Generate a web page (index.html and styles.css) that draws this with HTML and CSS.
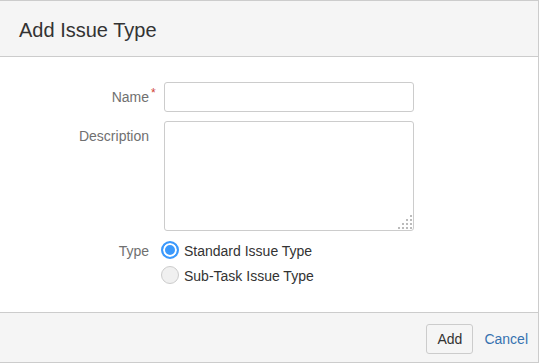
FILE: index.html
```html
<!DOCTYPE html>
<html lang="en">
<head>
  <meta charset="UTF-8" />
  <meta name="viewport" content="width=device-width, initial-scale=1.0" />
  <title>Add Issue Type</title>
  <link rel="stylesheet" href="styles.css">
</head>
<body>
  <div class="dialog">
    <div class="cabecalho">
      <h2>Add Issue Type</h2>
    </div>

    <form class="conteudo">
      <div class="campo">
        <label for="nome">Name<span class="obrigatorio">*</span></label>
        <input type="text" id="nome" class="texto">
      </div>

      <div class="campo">
        <label for="descricao">Description</label>
        <div class="area">
          <textarea id="descricao"></textarea>
          <svg class="alca" width="14" height="14" viewBox="0 0 14 14">
            <rect x="12" y="0" width="2" height="2" />
            <rect x="8" y="4" width="2" height="2" />
            <rect x="12" y="4" width="2" height="2" />
            <rect x="4" y="8" width="2" height="2" />
            <rect x="8" y="8" width="2" height="2" />
            <rect x="12" y="8" width="2" height="2" />
            <rect x="0" y="12" width="2" height="2" />
            <rect x="4" y="12" width="2" height="2" />
            <rect x="8" y="12" width="2" height="2" />
            <rect x="12" y="12" width="2" height="2" />
          </svg>
        </div>
      </div>

      <div class="campo">
        <label>Type</label>
        <div class="opcoes">
          <label class="opcao"><input type="radio" name="tipo" checked> Standard Issue Type</label>
          <label class="opcao"><input type="radio" name="tipo"> Sub-Task Issue Type</label>
        </div>
      </div>
    </form>

    <div class="rodape">
      <button type="button">Add</button>
      <a href="#">Cancel</a>
    </div>
  </div>
</body>
</html>
```

FILE: styles.css
```css
body {
  margin: 0;
  font-family: 'Liberation Sans', Arial, sans-serif;
  font-size: 14px;
  color: #333;
  background-color: #fff;
}

.dialog {
  width: 538px;
  height: 361px;
  border: 1px solid #ccc;
  border-left: none;
  display: flex;
  flex-direction: column;
}

.cabecalho {
  background-color: #f5f5f5;
  border-bottom: 1px solid #ccc;
  padding: 17px 19px 14px;
}

.cabecalho h2 {
  margin: 0;
  font-size: 20px;
  line-height: 24px;
  font-weight: normal;
  color: #333;
}

.conteudo {
  flex: 1;
  padding-top: 25px;
}

.campo {
  display: flex;
  align-items: flex-start;
  gap: 15px;
  margin-bottom: 9px;
}

.campo:nth-child(2) {
  margin-bottom: 5px;
}

.campo > label {
  position: relative;
  width: 149px;
  text-align: right;
  padding-top: 5px;
  line-height: 20px;
  color: #707070;
}

.obrigatorio {
  position: absolute;
  left: 151px;
  top: 1px;
  color: #d04437;
  font-size: 12px;
}

.texto, textarea {
  box-sizing: border-box;
  width: 250px;
  border: 1px solid #ccc;
  border-radius: 3px;
  font-family: inherit;
  font-size: 14px;
  margin: 0;
}

.texto {
  height: 30px;
}

.area {
  position: relative;
  height: 110px;
}

textarea {
  display: block;
  height: 110px;
  resize: none;
}

.alca {
  position: absolute;
  right: 2px;
  bottom: 2px;
  fill: #bbb;
}

.opcoes {
  margin-left: -3px;
  padding-top: 5px;
  display: flex;
  flex-direction: column;
  gap: 5px;
}

.opcao {
  display: flex;
  align-items: flex-start;
  gap: 5px;
  line-height: 20px;
  color: #333;
}

.opcao input {
  appearance: none;
  box-sizing: border-box;
  width: 18px;
  height: 18px;
  margin: 0;
  border-radius: 50%;
  border: 1px solid #ccc;
  background-color: #f0f0f0;
}

.opcao input:checked {
  border: 2px solid #3b99fc;
  background-color: #3b99fc;
  box-shadow: inset 0 0 0 2px #fff;
}

.rodape {
  background-color: #f5f5f5;
  border-top: 1px solid #ccc;
  padding: 11px 10px 8px;
  display: flex;
  justify-content: flex-end;
  align-items: center;
  gap: 11px;
}

.rodape button {
  height: 30px;
  padding: 0 10px;
  background-color: #f5f5f5;
  border: 1px solid #ccc;
  border-radius: 3px;
  font-family: inherit;
  font-size: 14px;
  color: #333;
}

.rodape a {
  text-decoration: none;
  color: #3572b0;
}
```
